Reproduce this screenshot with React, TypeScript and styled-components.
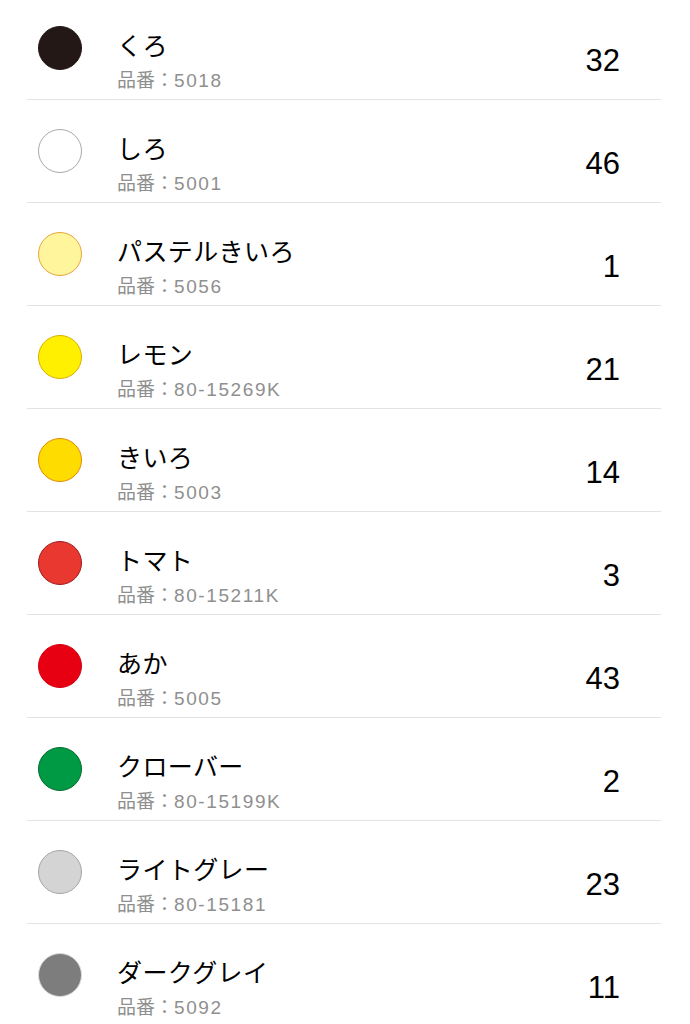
import styled, { createGlobalStyle } from 'styled-components';

type Color = {
  name: string;
  code: string;
  count: number;
  fill: string;
  edge: string;
};

const colors: Color[] = [
  { name: 'くろ', code: '5018', count: 32, fill: '#231815', edge: '#231815' },
  { name: 'しろ', code: '5001', count: 46, fill: '#ffffff', edge: '#a9a9a9' },
  { name: 'パステルきいろ', code: '5056', count: 1, fill: '#fff59c', edge: '#e7a53a' },
  { name: 'レモン', code: '80-15269K', count: 21, fill: '#fff000', edge: '#d8b000' },
  { name: 'きいろ', code: '5003', count: 14, fill: '#ffdc00', edge: '#e08a00' },
  { name: 'トマト', code: '80-15211K', count: 3, fill: '#e8382f', edge: '#9e1b1b' },
  { name: 'あか', code: '5005', count: 43, fill: '#e60012', edge: '#d4000f' },
  { name: 'クローバー', code: '80-15199K', count: 2, fill: '#009a44', edge: '#006b2e' },
  { name: 'ライトグレー', code: '80-15181', count: 23, fill: '#d4d4d4', edge: '#a4a4a4' },
  { name: 'ダークグレイ', code: '5092', count: 11, fill: '#7d7d7d', edge: '#dadada' },
];

const GlobalStyle = createGlobalStyle`
  html, body {
    margin: 0;
    padding: 0;
    background: #ffffff;
    overflow: hidden;
  }
  body {
    font-family: "Liberation Sans", "Noto Sans CJK JP", sans-serif;
    color: #000;
  }
`;

/** Scrolled list of colour stock rows */
const List = styled.ul`
  list-style: none;
  margin: -3px 29px 0 27px;
  padding: 0;
`;

const Row = styled.li`
  display: flex;
  align-items: center;
  height: 103px;
  box-sizing: border-box;
  border-bottom: 1px solid #e2e2e2;
`;

const Swatch = styled.span<{ fill: string; edge: string }>`
  flex: none;
  width: 44px;
  height: 44px;
  box-sizing: border-box;
  margin: 0 35px 0 11px;
  border-radius: 50%;
  background: ${({ fill }) => fill};
  border: 1.5px solid ${({ edge }) => edge};
`;

const Info = styled.div`
  flex: 1;
  align-self: flex-start;
  display: flex;
  flex-direction: column;
  padding-top: 32px;
`;

const Name = styled.div`
  font-family: "Noto Sans CJK JP", sans-serif;
  font-size: 25px;
  line-height: 30px;
  letter-spacing: 0.4px;
`;

const Code = styled.div`
  margin-top: 10px;
  font-size: 19px;
  line-height: 24px;
  color: #8f8f8f;
`;

const CodeNo = styled.span`
  letter-spacing: 1.6px;
`;

const Count = styled.div`
  align-self: flex-start;
  padding: 47px 41px 0 0;
  font-size: 31px;
  line-height: 34px;
  text-align: right;
`;

export default function App() {
  return (
    <>
      <GlobalStyle />
      <List>
        {colors.map((c) => (
          <Row key={c.name}>
            <Swatch fill={c.fill} edge={c.edge} />
            <Info>
              <Name>{c.name}</Name>
              <Code>
                品番：<CodeNo>{c.code}</CodeNo>
              </Code>
            </Info>
            <Count>{c.count}</Count>
          </Row>
        ))}
      </List>
    </>
  );
}
